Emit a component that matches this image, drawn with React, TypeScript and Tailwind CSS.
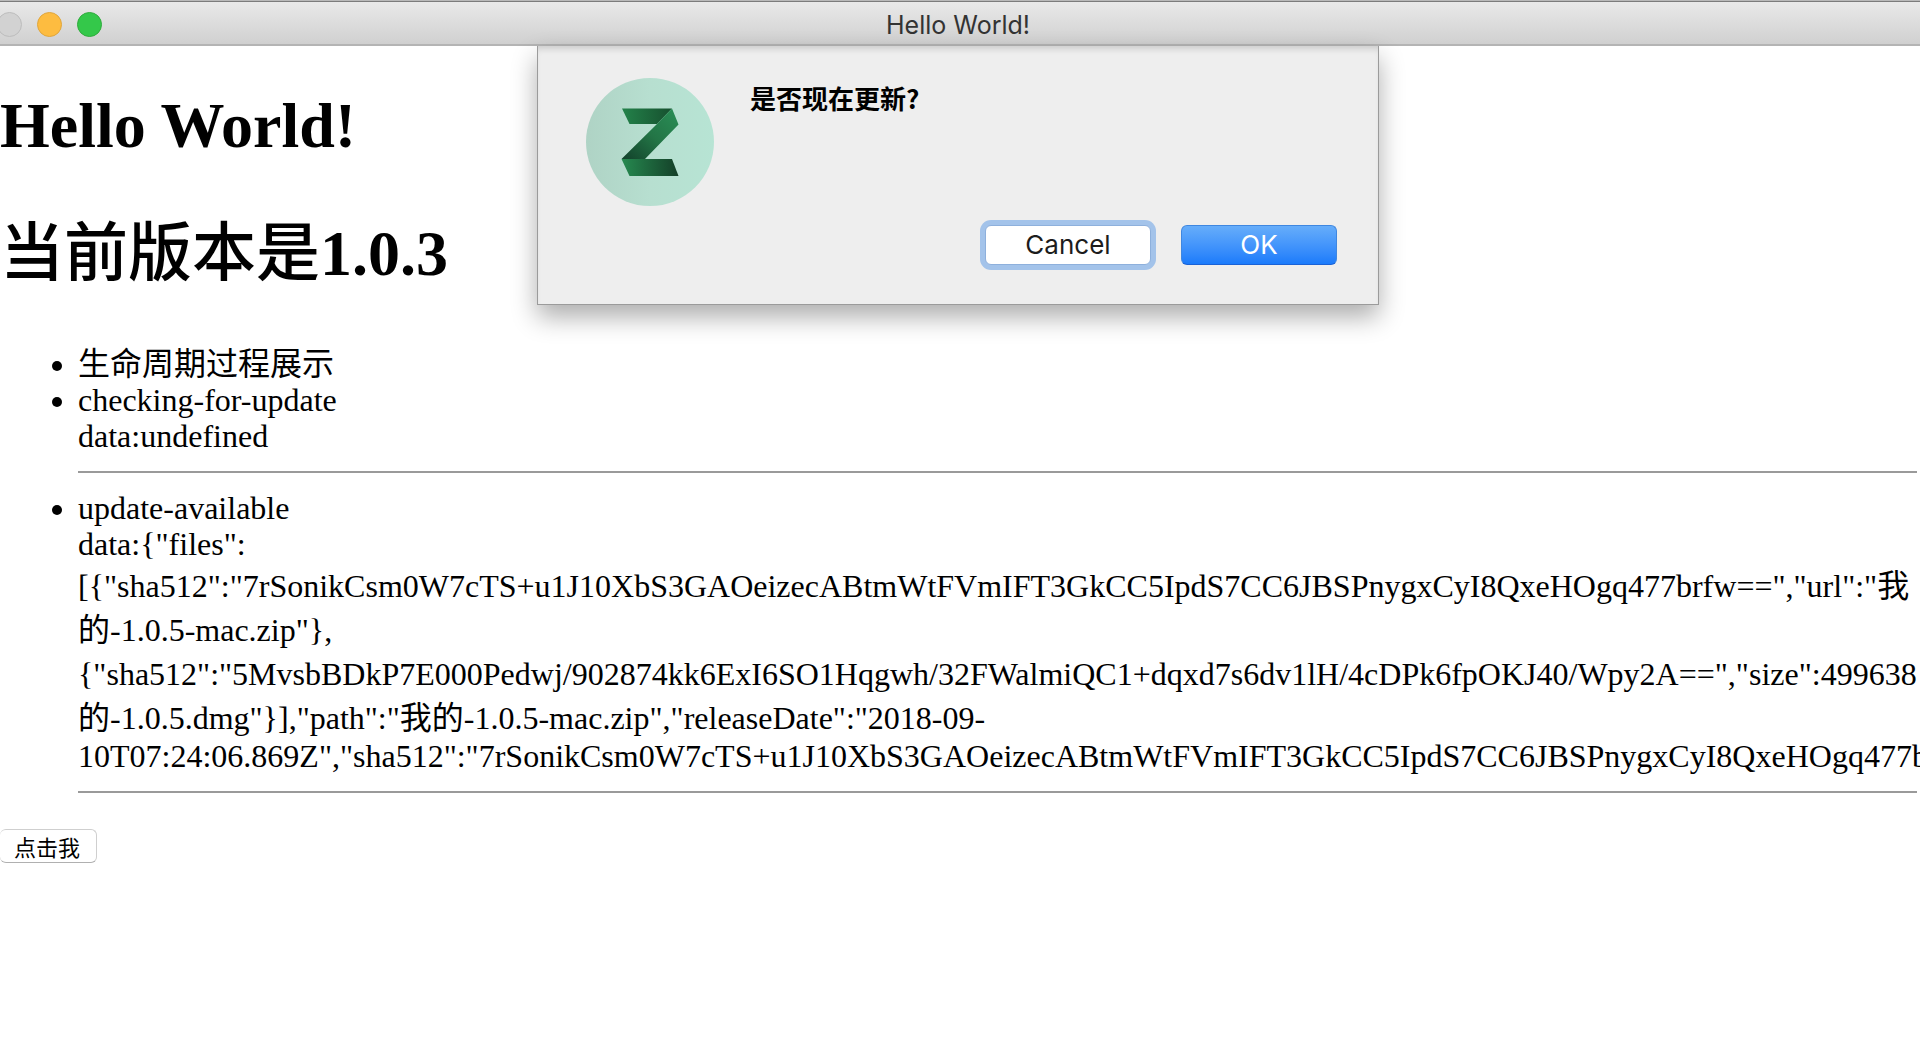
import type { ReactNode } from "react";

interface EventEntry {
  name: string;
  lines: { text: string; tall?: boolean }[];
}

const events: EventEntry[] = [
  { name: "checking-for-update", lines: [{ text: "data:undefined" }] },
  {
    name: "update-available",
    lines: [
      { text: 'data:{"files":' },
      { text: '[{"sha512":"7rSonikCsm0W7cTS+u1J10XbS3GAOeizecABtmWtFVmIFT3GkCC5IpdS7CC6JBSPnygxCyI8QxeHOgq477brfw==","url":"我', tall: true },
      { text: '的-1.0.5-mac.zip"},', tall: true },
      { text: '{"sha512":"5MvsbBDkP7E000Pedwj/902874kk6ExI6SO1Hqgwh/32FWalmiQC1+dqxd7s6dv1lH/4cDPk6fpOKJ40/Wpy2A==","size":499638', tall: true },
      { text: '的-1.0.5.dmg"}],"path":"我的-1.0.5-mac.zip","releaseDate":"2018-09-', tall: true },
      { text: '10T07:24:06.869Z","sha512":"7rSonikCsm0W7cTS+u1J10XbS3GAOeizecABtmWtFVmIFT3GkCC5IpdS7CC6JBSPnygxCyI8QxeHOgq477b' },
    ],
  },
];

const TitleBar = ({ title }: { title: string }) => (
  <header className="border-t border-[#b9b9b9]">
    <div className="relative h-[45px] flex items-center border-t border-t-[#7c7c7c] border-b-2 border-b-[#b4b4b4] bg-linear-to-b from-[#e9e9e9] to-[#d0d0d0]">
      <div className="-ml-[3px] flex gap-[15px] pt-0.5">
        <button type="button" aria-label="Close" className="size-[25px] rounded-full border border-[#bdbdbd] bg-[#d2d2d2]" />
        <button type="button" aria-label="Minimize" className="size-[25px] rounded-full border border-[#e0a63c] bg-[#fdbc40]" />
        <button type="button" aria-label="Zoom" className="size-[25px] rounded-full border border-[#2fac3c] bg-[#34c84a]" />
      </div>
      <div className="absolute inset-0 flex items-center justify-center pt-1.5 pr-1 pointer-events-none font-[Inter,'Liberation_Sans',sans-serif] text-[25px] text-[#333]">
        {title}
      </div>
    </div>
  </header>
);

const AppIcon = () => (
  <svg viewBox="0 0 128 128" className="size-32 shrink-0" role="img" aria-label="App icon">
    <defs>
      <linearGradient id="disc" x1="0" x2="1">
        <stop offset="0" stopColor="#afd3c5" />
        <stop offset="0.5" stopColor="#b7dfd0" />
        <stop offset="1" stopColor="#b7e4d4" />
      </linearGradient>
      <linearGradient id="top" x1="0" x2="1">
        <stop offset="0" stopColor="#23824a" />
        <stop offset="1" stopColor="#17502f" />
      </linearGradient>
      <linearGradient id="diagonal" x1="1" y1="0" x2="0" y2="1">
        <stop offset="0" stopColor="#2a8f57" />
        <stop offset="0.5" stopColor="#237546" />
        <stop offset="1" stopColor="#12402a" />
      </linearGradient>
      <linearGradient id="bottom" x1="0" x2="1">
        <stop offset="0" stopColor="#268a50" />
        <stop offset="1" stopColor="#143f28" />
      </linearGradient>
    </defs>
    <circle cx="64" cy="64" r="64" fill="url(#disc)" />
    <path d="M36 30.5H86L71 46H43.5Z" fill="url(#top)" />
    <path d="M86 30.5L92.5 46.5L59 81H35.5L71 46Z" fill="url(#diagonal)" />
    <path d="M35.5 81H86L92.5 98H43.5Z" fill="url(#bottom)" />
  </svg>
);

const DialogButton = ({ primary, children }: { primary?: boolean; children: ReactNode }) => (
  <button
    type="button"
    className={
      primary
        ? "h-10 w-[156px] rounded-md border border-[#3f87e0] border-b-[#1a62d6] bg-linear-to-b from-[#66adfa] to-[#1a7bfb] text-white"
        : "h-10 w-[166px] rounded-md border border-[#8eb0dc] bg-white text-[#1c1c1c] ring-5 ring-[#a3c3ea]"
    }
  >
    {children}
  </button>
);

const UpdateDialog = () => (
  <div className="absolute inset-x-0 top-full flex justify-center pr-1">
    <div
      role="dialog"
      aria-labelledby="update-title"
      className="w-full max-w-[842px] border border-t-0 border-[#9b9b9b] bg-[#eeeeee] pt-8 pb-[39px] pl-12 pr-[41px] shadow-[0_12px_24px_rgba(0,0,0,0.32)] inset-shadow-[0_6px_6px_-3px_rgba(0,0,0,0.14)]"
    >
      <div className="flex gap-9">
        <AppIcon />
        <h2 id="update-title" className="font-['Noto_Sans_CJK_SC',sans-serif] text-[26px] leading-10 font-bold text-black">是否现在更新?</h2>
      </div>
      <div className="mt-[19px] flex justify-end gap-[30px] font-[Inter,'Liberation_Sans',sans-serif] text-[26px] leading-8">
        <DialogButton>Cancel</DialogButton>
        <DialogButton primary>OK</DialogButton>
      </div>
    </div>
  </div>
);

const Divider = () => <hr className="my-[17px] mr-[3px] border-t-2 border-[#9a9a9a]" />;

export default function App() {
  return (
    <div className="min-h-screen overflow-hidden bg-white text-black">
      <div className="relative z-10">
        <TitleBar title="Hello World!" />
        <UpdateDialog />
      </div>

      <main className="pt-11 font-['Liberation_Serif','Noto_Sans_CJK_SC',serif] text-[32px] leading-9">
        <h1 className="text-[64px] leading-18 font-bold">Hello World!</h1>
        <h1 className="mt-14 text-[64px] leading-18 font-bold">
          <span className="font-medium">当前版本是</span>1.0.3
        </h1>

        <ul className="mt-14 list-disc pl-[78px] whitespace-nowrap">
          <li>生命周期过程展示</li>
          {events.map((event) => (
            <li key={event.name}>
              {event.name}
              {event.lines.map((line) => (
                <div key={line.text} className={line.tall ? "pt-1 leading-10" : "leading-9"}>
                  {line.text}
                </div>
              ))}
              <Divider />
            </li>
          ))}
        </ul>

        <button type="button" className="mt-9 block h-[34px] rounded-md border border-l-0 border-[#cfcfcf] border-b-[#b0b0b0] bg-white pr-4 pl-3.5 font-['Noto_Sans_CJK_SC',sans-serif] text-[22px] leading-8">
          点击我
        </button>
      </main>
    </div>
  );
}
